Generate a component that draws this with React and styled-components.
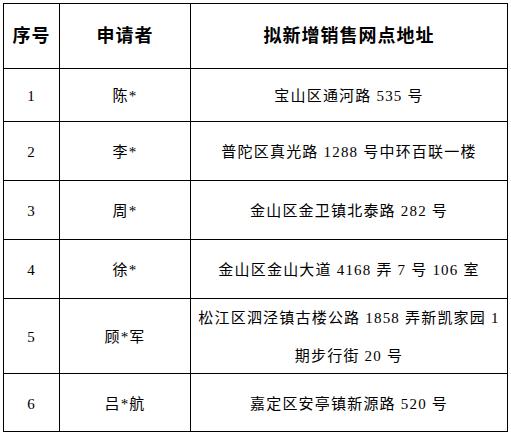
import styled, { createGlobalStyle } from 'styled-components';

const GlobalStyle = createGlobalStyle`
  html, body {
    margin: 0;
    padding: 0;
    background: #ffffff;
  }
`;

const rows = [
  { no: '1', name: '陈*', address: ['宝山区通河路 535 号'] },
  { no: '2', name: '李*', address: ['普陀区真光路 1288 号中环百联一楼'] },
  { no: '3', name: '周*', address: ['金山区金卫镇北泰路 282 号'] },
  { no: '4', name: '徐*', address: ['金山区金山大道 4168 弄 7 号 106 室'] },
  { no: '5', name: '顾*军', address: ['松江区泗泾镇古楼公路 1858 弄新凯家园 1', '期步行街 20 号'] },
  { no: '6', name: '吕*航', address: ['嘉定区安亭镇新源路 520 号'] },
];

const Page = styled.div`
  padding: 3px 0 0 3px;
`;

const Grid = styled.div`
  display: grid;
  grid-template-columns: 56px 131px 317px;
  grid-template-rows: 65px 53px 59px 59px 59px 75px 58px;
  width: max-content;
  border-top: 1px solid #000;
  border-left: 1px solid #000;
  font-family: "Liberation Serif", "Noto Sans CJK SC", serif;
  color: #000;
`;

const Cell = styled.div`
  box-sizing: border-box;
  display: flex;
  flex-direction: column;
  align-items: center;
  justify-content: center;
  border-right: 1px solid #000;
  border-bottom: 1px solid #000;
  padding-top: ${(p) => (p.$head ? '0' : '2px')};
  font-size: ${(p) => (p.$head ? '18px' : '15px')};
  font-weight: ${(p) => (p.$head ? 'bold' : 'normal')};
  letter-spacing: ${(p) => (p.$head ? '1px' : '1.2px')};
  line-height: 38px;
  text-align: center;
`;

const Line = styled.div`
  white-space: nowrap;
`;

export default function App() {
  return (
    <Page>
      <GlobalStyle />
      <Grid>
        <Cell $head>序号</Cell>
        <Cell $head>申请者</Cell>
        <Cell $head>拟新增销售网点地址</Cell>
        {rows.map((r) => [
          <Cell key={r.no + 'n'}>{r.no}</Cell>,
          <Cell key={r.no + 'p'}>{r.name}</Cell>,
          <Cell key={r.no + 'a'}>
            {r.address.map((a) => (
              <Line key={a}>{a}</Line>
            ))}
          </Cell>,
        ])}
      </Grid>
    </Page>
  );
}
